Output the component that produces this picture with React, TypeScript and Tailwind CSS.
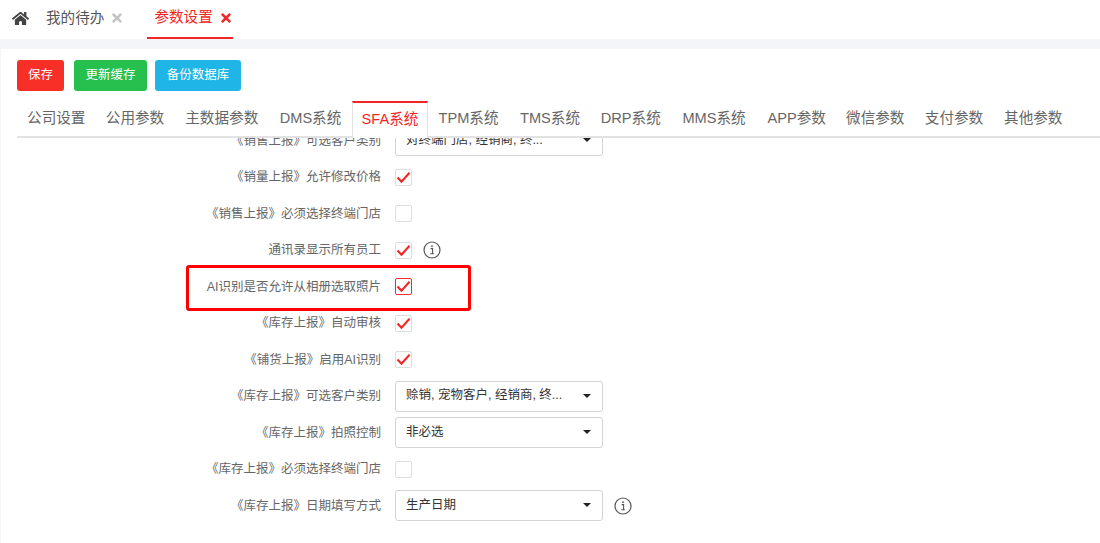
import React from 'react';
import { FaHome, FaTimes } from 'react-icons/fa';

const FONT = '"Liberation Sans", "Noto Sans CJK SC", sans-serif';

const TABS = [
  { name: '公司设置', w: 'w-[78.5px]' },
  { name: '公用参数', w: 'w-[79px]' },
  { name: '主数据参数', w: 'w-[94.5px]' },
  { name: 'DMS系统', w: 'w-[83px]' },
  { name: 'SFA系统', w: 'w-[76px]', active: true },
  { name: 'TPM系统', w: 'w-[81px]' },
  { name: 'TMS系统', w: 'w-[82px]' },
  { name: 'DRP系统', w: 'w-[79.5px]' },
  { name: 'MMS系统', w: 'w-[87px]' },
  { name: 'APP参数', w: 'w-[78.5px]' },
  { name: '微信参数', w: 'w-[78.5px]' },
  { name: '支付参数', w: 'w-[79px]' },
  { name: '其他参数', w: 'w-[79.5px]' },
];

const InfoIcon = () => (
  <svg width="18" height="18" viewBox="0 0 18 18" fill="none" className="ml-[11px] shrink-0">
    <circle cx="9" cy="9" r="8" stroke="#555" strokeWidth="1.2" />
    <path d="M7.6 7.6h2v5M7.2 12.8h3.6" stroke="#555" strokeWidth="1.1" />
    <rect x="8.2" y="4.4" width="1.6" height="1.6" fill="#555" />
  </svg>
);

const Check = ({ checked, alert }: { checked?: boolean; alert?: boolean }) => (
  <div className={`w-[17px] h-[17px] rounded-[2px] border flex items-center justify-center ${alert ? 'border-[#f03030]' : 'border-[#ddd]'}`}>
    {checked && (
      <svg width="15" height="15" viewBox="0 0 15 15" fill="none">
        <path d="M1.5 7.5l4 4.3L13.5 2.8" stroke="#f32626" strokeWidth="2.1" />
      </svg>
    )}
  </div>
);

const Select = ({ value }: { value: string }) => (
  <div className="w-[208px] h-[31px] rounded-[3px] border border-[#d4d4d4] bg-white pl-[10px] pr-[11px] flex items-center justify-between text-[12.5px] text-[#333]">
    <span className="truncate w-[160px] mb-[1px]">{value}</span>
    <span className="mb-[1px] w-0 h-0 border-x-[4px] border-x-transparent border-t-[4px] border-t-[#222]" />
  </div>
);

const Row = ({ label, children, info }: { label: string; children: React.ReactNode; info?: boolean }) => (
  <div className="h-[36.5px] flex items-center">
    <div className="w-[380px] pt-[1px] text-right text-[12.5px] text-[#666] shrink-0">{label}</div>
    <div className="ml-[14px] flex items-center">
      {children}
      {info && <InfoIcon />}
    </div>
  </div>
);

export default function App() {
  return (
    <div className="w-[1100px] h-[543px] overflow-hidden bg-white flex flex-col" style={{ fontFamily: FONT }}>
      {/* top nav */}
      <div className="h-[39px] flex items-center shrink-0 text-[14.6px] whitespace-nowrap">
        <FaHome className="ml-[12px] mb-[3px] text-[#444] text-[17px]" />
        <div className="ml-[17px] mb-[2px] flex items-center text-[#555]">
          我的待办
          <FaTimes className="ml-[6px] text-[#c4c4c4] text-[14px]" />
        </div>
        <div className="ml-[23px] w-[86px] h-[39px] border-b-2 border-[#f32626] flex items-center pb-[2px] pl-[7px] text-[#f32626]">
          参数设置
          <FaTimes className="ml-[6px] shrink-0 text-[14px]" />
        </div>
      </div>
      <div className="h-[10px] bg-[#f3f5f9] shrink-0" />

      <div className="flex-1 min-h-0 flex flex-col border-l border-[#f3f5f9]">
        {/* toolbar */}
        <div className="flex pl-[16px] pt-[11px] shrink-0 text-[12.5px] text-white">
          <button className="h-[31px] w-[47px] rounded-[3px] bg-[#f72f27]">保存</button>
          <button className="ml-[10px] h-[31px] w-[73px] rounded-[3px] bg-[#25c04e]">更新缓存</button>
          <button className="ml-[8px] h-[31px] w-[86px] rounded-[3px] bg-[#1fb5e6]">备份数据库</button>
        </div>

        {/* tabs */}
        <div className="mt-[10px] ml-[16px] h-[37px] border-b-2 border-[#e2e2e2] flex shrink-0 text-[14.6px] text-[#666] whitespace-nowrap">
          {TABS.map((t) =>
            t.active ? (
              <div key={t.name} className={`${t.w} relative z-10 h-[37px] pb-[2px] bg-white border-x border-[#e2e2e2] border-t-2 border-t-[#f32626] text-[#f32626] flex items-center justify-center`}>
                {t.name}
              </div>
            ) : (
              <div key={t.name} className={`${t.w} h-[35px] flex items-center justify-center`}>{t.name}</div>
            )
          )}
        </div>

        {/* form, scrolled so the first row is cut off */}
        <div className="flex-1 overflow-hidden">
          <div className="-mt-[15.5px]">
            <Row label="《销售上报》可选客户类别"><Select value="对终端门店, 经销商, 终..." /></Row>
            <Row label="《销量上报》允许修改价格"><Check checked /></Row>
            <Row label="《销售上报》必须选择终端门店"><Check /></Row>
            <Row label="通讯录显示所有员工" info><Check checked /></Row>
            <div className="relative">
              <Row label="AI识别是否允许从相册选取照片"><Check checked alert /></Row>
              <div className="absolute left-[185px] top-[-3.5px] w-[285px] h-[46px] border-[3px] border-[#f00] rounded-[3px]" />
            </div>
            <Row label="《库存上报》自动审核"><Check checked /></Row>
            <Row label="《铺货上报》启用AI识别"><Check checked /></Row>
            <Row label="《库存上报》可选客户类别"><Select value="赊销, 宠物客户, 经销商, 终..." /></Row>
            <Row label="《库存上报》拍照控制"><Select value="非必选" /></Row>
            <Row label="《库存上报》必须选择终端门店"><Check /></Row>
            <Row label="《库存上报》日期填写方式" info><Select value="生产日期" /></Row>
          </div>
        </div>
      </div>
    </div>
  );
}
